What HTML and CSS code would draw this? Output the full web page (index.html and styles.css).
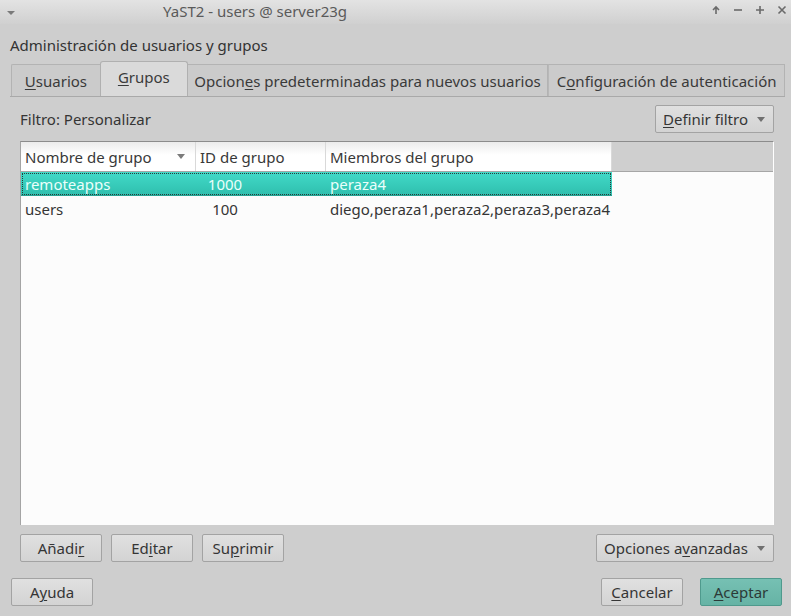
FILE: index.html
```html
<!DOCTYPE html>
<html lang="es">
<head>
<meta charset="utf-8">
<title>YaST2 - users @ server23g</title>
<link rel="stylesheet" href="styles.css">
</head>
<body>
<div class="window">
  <div class="titlebar">
    <span class="menu-arrow"></span>
    <span class="title">YaST2 - users @ server23g</span>
    <div class="controls">
      <svg width="10" height="10" viewBox="0 0 10 10"><path d="M5 9V2M2 5l3-3 3 3" stroke="#6a6a6a" stroke-width="1.6" fill="none"/></svg>
      <svg width="10" height="10" viewBox="0 0 10 10"><path d="M1 5h8" stroke="#6a6a6a" stroke-width="1.6"/></svg>
      <svg width="10" height="10" viewBox="0 0 10 10"><path d="M1 5h8M5 1v8" stroke="#6a6a6a" stroke-width="1.6"/></svg>
      <svg width="10" height="10" viewBox="0 0 10 10"><path d="M1.5 1.5l7 7M8.5 1.5l-7 7" stroke="#6a6a6a" stroke-width="1.6"/></svg>
    </div>
  </div>

  <div class="content">
    <div class="heading">Administración de usuarios y grupos</div>

    <div class="tabs">
      <div class="tab t1"><u>U</u>suarios</div>
      <div class="tab t2 active"><u>G</u>rupos</div>
      <div class="tab t3">Opcion<u>e</u>s predeterminadas para nuevos usuarios</div>
      <div class="tab t4">C<u>o</u>nfiguración de autenticación</div>
    </div>

    <div class="pane">
      <div class="filter-row">
        <span class="filter-label">Filtro: Personalizar</span>
        <button class="btn combo filter-btn"><span><u>D</u>efinir filtro</span><span class="caret"></span></button>
      </div>

      <div class="table">
        <div class="thead">
          <div class="th c1">Nombre de grupo<span class="sort"></span></div>
          <div class="th c2">ID de grupo</div>
          <div class="th c3">Miembros del grupo</div>
          <div class="th-fill"></div>
        </div>
        <div class="row selected">
          <div class="td c1">remoteapps</div>
          <div class="td c2"><span class="num">1000</span></div>
          <div class="td c3">peraza4</div>
        </div>
        <div class="row">
          <div class="td c1">users</div>
          <div class="td c2"><span class="num">100</span></div>
          <div class="td c3">diego,peraza1,peraza2,peraza3,peraza4</div>
        </div>
      </div>

      <div class="actions">
        <button class="btn act">Añadi<u>r</u></button>
        <button class="btn act">Ed<u>i</u>tar</button>
        <button class="btn act">Su<u>p</u>rimir</button>
        <span class="spacer"></span>
        <button class="btn combo adv-btn"><span>Opciones a<u>v</u>anzadas</span><span class="caret"></span></button>
      </div>
    </div>

    <div class="footer">
      <button class="btn act">A<u>y</u>uda</button>
      <span class="spacer"></span>
      <button class="btn act"><u>C</u>ancelar</button>
      <button class="btn act primary"><u>A</u>ceptar</button>
    </div>
  </div>
</div>
</body>
</html>
```

FILE: styles.css
```css
* { box-sizing: border-box; }
html, body { margin: 0; padding: 0; }
body {
  width: 791px;
  height: 616px;
  overflow: hidden;
  background: #cecece;
  font-family: "Noto Sans", "Open Sans", sans-serif;
  font-size: 15px;
  color: #353535;
}
u { text-decoration: underline; text-underline-offset: 2px; text-decoration-thickness: 1px; }

.window { width: 791px; height: 616px; background: #cecece; }

.titlebar {
  height: 24px;
  background: linear-gradient(#e3e3e3, #d0d0d0);
  display: flex;
  align-items: center;
  position: relative;
}
.menu-arrow {
  width: 0; height: 0;
  border-left: 4px solid transparent;
  border-right: 4px solid transparent;
  border-top: 4px solid #7a7a7a;
  margin-left: 7px;
  margin-top: 1px;
}
.title {
  margin-left: 148px;
  color: #5a5a5a;
  font-size: 15px;
  margin-top: -2px;
}
.controls {
  margin-left: auto;
  margin-right: 4px;
  display: flex;
  gap: 12px;
  align-items: center;
  margin-top: -4px;
}

.content { padding: 0 6px 0 10px; }
.heading { height: 38px; padding-top: 11px; line-height: 20px; color: #333; }

.tabs {
  display: flex;
  align-items: flex-end;
  height: 35px;
  border-bottom: 1px solid #a9a9a9;
  width: 775px;
}
.tab {
  height: 32px;
  border: 1px solid #b3b3b3;
  border-bottom: none;
  background: #cbcbcb;
  display: flex;
  align-items: center;
  justify-content: center;
  color: #3a3a3a;
  line-height: 20px;
}
.t1 { width: 89px; margin-left: 1px; border-right: none; border-radius: 2px 0 0 0; }
.t2 { width: 88px; }
.t3 { width: 361px; border-left: none; }
.t4 { width: 237px; border-left: 1px solid #b8b8b8; }
.tab.active {
  height: 35px;
  background: #dadada;
  border-color: #b0b0b0;
  border-radius: 3px 3px 0 0;
  padding-bottom: 5px;
}

.pane { padding: 0 2px 0 10px; }
.filter-row {
  display: flex;
  align-items: center;
  height: 28px;
  margin-top: 8px;
  width: 754px;
}
.filter-label { color: #353535; }

.btn {
  font-family: inherit;
  font-size: 15px;
  color: #353535;
  background: linear-gradient(#e0e0e0, #d3d3d3);
  border: 1px solid #a3a3a3;
  border-radius: 2px;
  height: 28px;
  padding: 0;
  display: flex;
  align-items: center;
  justify-content: center;
}
.combo { justify-content: space-between; padding: 0 8px 0 7px; }
.filter-btn { margin-left: auto; width: 119px; }
.adv-btn { width: 178px; }
.caret {
  width: 0; height: 0;
  border-left: 4px solid transparent;
  border-right: 4px solid transparent;
  border-top: 5px solid #707070;
}

.table {
  margin-top: 8px;
  width: 754px;
  height: 384px;
  background: #fcfcfc;
  border-top: 1px solid #8c8c8c;
  border-left: 1px solid #a4a4a4;
  border-right: 1px solid #ffffff;
}
.thead {
  display: flex;
  height: 30px;
  border-bottom: 1px solid #a6a6a6;
}
.th {
  background: linear-gradient(#ececec, #ffffff 45%, #ffffff);
  border-right: 1px solid #d9d9d9;
  display: flex;
  align-items: center;
  padding-left: 4px;
  color: #383838;
  position: relative;
}
.th-fill { flex: 1; background: #cfcfcf; }
.c1 { width: 175px; }
.c2 { width: 130px; }
.c3 { width: 286px; }
.sort {
  position: absolute;
  right: 10px;
  top: 12px;
  width: 0; height: 0;
  border-left: 4px solid transparent;
  border-right: 4px solid transparent;
  border-top: 5px solid #7b7b7b;
}
.row {
  display: flex;
  height: 25px;
  width: 591px;
  align-items: center;
}
.row.selected {
  height: 24px;
  background: linear-gradient(#42dac8, #2fbfae);
  outline: 1px dotted #2a3a38;
  outline-offset: -2px;
  color: #eafffb;
  border-bottom: 1px solid #26a293;
}
.td { padding-left: 4px; line-height: 20px; }
.td.c2 { padding-left: 0; }
.num { display: inline-block; width: 58px; text-align: center; }

.actions {
  display: flex;
  margin-top: 9px;
  width: 754px;
  gap: 9px;
}
.act { width: 82px; }
.spacer { flex: 1; }

.footer {
  display: flex;
  margin-top: 16px;
  width: 772px;
  padding-left: 1px;
  gap: 17px;
}
.footer .act { width: 82px; }
.primary {
  background: linear-gradient(#76c0b3, #66b3a5);
  border-color: #4f9a8d;
  color: #2c3a38;
}
```
